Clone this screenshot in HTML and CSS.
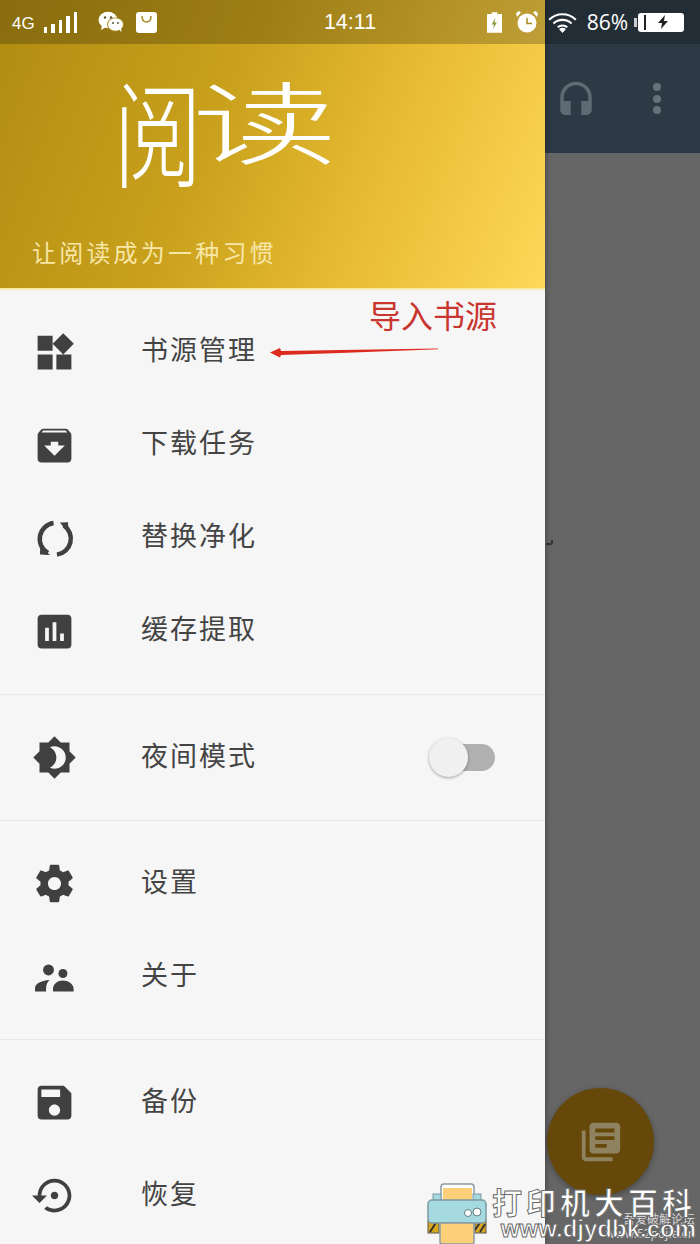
FILE: index.html
```html
<!DOCTYPE html>
<html lang="zh">
<head>
    <meta charset="UTF-8">
    <meta name="viewport" content="width=device-width, initial-scale=1.0">
    <title>阅读</title>
    <link rel="stylesheet" href="styles.css">
</head>
<body>
    <div class="screen">
        <aside class="drawer">
            <header class="drawer-head">
                <div class="logo"><span>阅</span><span>读</span></div>
                <p class="slogan">让阅读成为一种习惯</p>
            </header>
            <div class="group first">
                <div class="row">
                    <svg class="icon" viewBox="0 0 24 24"><path d="M13 13v8h8v-8h-8zM3 21h8v-8H3v8zM3 3v8h8V3H3zm13.66-1.31L11 7.34 16.66 13l5.66-5.66-5.66-5.65z"/></svg>
                    <span>书源管理</span>
                </div>
                <div class="row">
                    <svg class="icon" viewBox="0 0 24 24"><path d="M20.54 5.23l-1.39-1.68C18.88 3.21 18.47 3 18 3H6c-.47 0-.88.21-1.16.55L3.46 5.23C3.17 5.57 3 6.02 3 6.5V19c0 1.1.9 2 2 2h14c1.1 0 2-.9 2-2V6.5c0-.48-.17-.93-.46-1.27zM12 17.5L6.5 12H10v-2h4v2h3.5L12 17.5zM5.12 5l.81-1h12l.94 1H5.12z"/></svg>
                    <span>下载任务</span>
                </div>
                <div class="row">
                    <svg class="icon" viewBox="0 0 24 24"><path class="arc" d="M11.500 3.700A8.600 8.600 0 0 0 8.500 19.700"/><path class="arc" d="M17 5A8.600 8.600 0 0 1 13.300 20.600"/><path d="M4.300 15.700v4.800l5.300.3zM19.500 9.300l-.3-6-4.300.2z"/></svg>
                    <span>替换净化</span>
                </div>
                <div class="row">
                    <svg class="icon" viewBox="0 0 24 24"><path d="M19 3H5c-1.1 0-2 .9-2 2v14c0 1.1.9 2 2 2h14c1.1 0 2-.9 2-2V5c0-1.1-.9-2-2-2zM9 17H7v-7h2v7zm4 0h-2V7h2v10zm4 0h-2v-4h2v4z"/></svg>
                    <span>缓存提取</span>
                </div>
            </div>
            <div class="group">
                <div class="row">
                    <svg class="icon" viewBox="0 0 24 24"><path d="M20 8.69V4h-4.69L12 .69 8.69 4H4v4.69L.69 12 4 15.31V20h4.69L12 23.31 15.31 20H20v-4.69L23.31 12 20 8.69zM12 18c-.89 0-1.74-.2-2.5-.55C11.56 16.5 13 14.42 13 12s-1.44-4.5-3.5-5.45C10.26 6.2 11.11 6 12 6c3.31 0 6 2.69 6 6s-2.69 6-6 6z"/></svg>
                    <span>夜间模式</span>
                    <div class="switch"><i></i></div>
                </div>
            </div>
            <div class="group">
                <div class="row">
                    <svg class="icon" viewBox="0 0 24 24"><path d="M19.43 12.98c.04-.32.07-.64.07-.98s-.03-.66-.07-.98l2.11-1.65c.19-.15.24-.42.12-.64l-2-3.46c-.12-.22-.39-.3-.61-.22l-2.49 1c-.52-.4-1.08-.73-1.69-.98l-.38-2.65C14.46 2.18 14.25 2 14 2h-4c-.25 0-.46.18-.49.42l-.38 2.65c-.61.25-1.17.59-1.69.98l-2.49-1c-.23-.09-.49 0-.61.22l-2 3.46c-.13.22-.07.49.12.64l2.11 1.65c-.04.32-.07.65-.07.98s.03.66.07.98l-2.11 1.65c-.19.15-.24.42-.12.64l2 3.46c.12.22.39.3.61.22l2.49-1c.52.4 1.08.73 1.69.98l.38 2.65c.03.24.24.42.49.42h4c.25 0 .46-.18.49-.42l.38-2.65c.61-.25 1.17-.59 1.69-.98l2.49 1c.23.09.49 0 .61-.22l2-3.46c.12-.22.07-.49-.12-.64l-2.11-1.65zM12 15.5c-1.93 0-3.5-1.57-3.5-3.5s1.57-3.5 3.5-3.5 3.5 1.57 3.5 3.5-1.57 3.5-3.5 3.5z"/></svg>
                    <span>设置</span>
                </div>
                <div class="row">
                    <svg class="icon" viewBox="0 0 24 24"><circle cx="8.800" cy="8.500" r="2.900"/><circle cx="16.500" cy="10.400" r="2.400"/><path d="M11.200 20v-1.500c0-2.600 2.700-4.400 5.300-4.400s5.700 1.800 5.700 4.400V20zM1.600 20v-1.700c0-2.400 3-4.100 7.800-4.400-1.300 1.100-1.900 2.800-1.900 4.600V20z"/></svg>
                    <span>关于</span>
                </div>
            </div>
            <div class="group last">
                <div class="row">
                    <svg class="icon" viewBox="0 0 24 24"><path d="M17 3H5c-1.11 0-2 .9-2 2v14c0 1.1.89 2 2 2h14c1.1 0 2-.9 2-2V7l-4-4zm-5 16c-1.66 0-3-1.34-3-3s1.34-3 3-3 3 1.34 3 3-1.34 3-3 3zm3-10H5V5h10v4z"/></svg>
                    <span>备份</span>
                </div>
                <div class="row">
                    <svg class="icon" viewBox="0 0 24 24"><path d="M14 12c0-1.1-.9-2-2-2s-2 .9-2 2 .9 2 2 2 2-.9 2-2zm-2-9c-4.97 0-9 4.03-9 9H0l4 4 4-4H5c0-3.87 3.13-7 7-7s7 3.13 7 7-3.13 7-7 7c-1.51 0-2.91-.49-4.06-1.3l-1.42 1.44C8.04 20.3 9.94 21 12 21c4.97 0 9-4.03 9-9s-4.03-9-9-9z"/></svg>
                    <span>恢复</span>
                </div>
            </div>
        </aside>

        <main class="behind">
            <div class="appbar">
                <svg class="headset" viewBox="0 0 24 24"><path d="M12 1c-4.97 0-9 4.03-9 9v7c0 1.66 1.34 3 3 3h3v-8H5v-2c0-3.87 3.13-7 7-7s7 3.13 7 7v2h-4v8h3c1.66 0 3-1.34 3-3v-7c0-4.97-4.03-9-9-9z"/></svg>
                <div class="dots"><i></i><i></i><i></i></div>
            </div>
            <div class="fab">
                <svg viewBox="0 0 24 24"><path d="M4 6H2v14c0 1.1.9 2 2 2h14v-2H4V6zm16-4H8c-1.1 0-2 .9-2 2v12c0 1.1.9 2 2 2h12c1.1 0 2-.9 2-2V4c0-1.1-.9-2-2-2zm-1 9H9V9h10v2zm-4 4H9v-2h6v2zm4-8H9V5h10v2z"/></svg>
            </div>
        </main>

        <div class="status">
            <div class="status-left">
                <span class="net">4G</span>
                <div class="bars"><i></i><i></i><i></i><i></i><i></i></div>
                <svg class="wechat" viewBox="0 0 26 22"><ellipse cx="10" cy="9" rx="9.500" ry="8.200"/><path d="M4 14l-1 5 5-3z"/><ellipse class="cut" cx="17.500" cy="13.500" rx="8.500" ry="7"/><ellipse cx="17.500" cy="13.500" rx="7.500" ry="6.200"/><path d="M21 18l2.500 3.500-.5-5z"/><circle class="eye" cx="7" cy="6.500" r="1.300"/><circle class="eye" cx="13" cy="6.500" r="1.300"/><circle class="eye" cx="15" cy="12" r="1"/><circle class="eye" cx="20" cy="12" r="1"/></svg>
                <svg class="bag" viewBox="0 0 21 21"><rect width="21" height="21" rx="3"/><path d="M6 4c0 4 2 6 4.500 6S15 8 15 4" fill="none" stroke="#a98a22" stroke-width="1.500"/></svg>
            </div>
            <span class="clock">14:11</span>
            <div class="status-right">
                <svg class="saver" viewBox="0 0 16 22"><path d="M5 0h6v2h5v20H0V2h5z"/><path d="M9 6l-4 7h2.500L6.500 18l4-7H8z" fill="#8c9a3a"/></svg>
                <svg class="alarm" viewBox="0 0 22 22"><circle cx="11" cy="12" r="9.500"/><path d="M1 6l4-4.500L2.500 0 0 2.500zM21 6l-4-4.500L19.500 0 22 2.500z"/><path d="M11 7v5.500h5" fill="none" stroke="#a98a22" stroke-width="1.500"/></svg>
                <svg class="wifi" viewBox="0 0 30 22"><path d="M1 8a20 20 0 0 1 28 0M5.500 12a14 14 0 0 1 19 0M10 16a7.500 7.500 0 0 1 10 0" fill="none" stroke="#fff" stroke-width="2.200"/><path d="M15 22l-3.500-4a5 5 0 0 1 7 0z"/></svg>
                <span class="pct">86%</span>
                <div class="battery">
                    <svg viewBox="0 0 12 14"><path d="M8 0L1 8h4l-1 6 7-8H7z"/></svg>
                </div>
            </div>
        </div>

        <div class="note">导入书源</div>
        <svg class="arrow" viewBox="0 0 170 12"><path d="M0 6.500L10 2l1 3 60-1 97-1.500v.800L70 7 11 9l-1 2.500z"/></svg>

        <div class="speck"></div>

        <div class="mark">
            <div class="mark-small">吾爱破解论坛<br>www.52pojie.cn</div>
            <svg class="printer" viewBox="0 0 60 62">
                <rect x="14" y="1" width="33" height="30" rx="3" fill="#fdfdfd" stroke="#8b9ba3" stroke-width="1.500"/>
                <rect x="16" y="5" width="29" height="26" fill="#fbd078"/>
                <rect x="6" y="11" width="8" height="10" fill="#a5dbe0" stroke="#7e9aa0"/>
                <rect x="46" y="11" width="8" height="10" fill="#a5dbe0" stroke="#7e9aa0"/>
                <rect x="1" y="37" width="11" height="13" fill="#d8a81e" stroke="#555"/>
                <rect x="48" y="37" width="11" height="13" fill="#d8a81e" stroke="#555"/>
                <path d="M3 49l7-11M48 47l6-9M53 49l5-8" stroke="#333" stroke-width="2"/>
                <rect x="1" y="17" width="58" height="23" rx="4" fill="#a5dbe0" stroke="#7e9aa0" stroke-width="1.500"/>
                <circle cx="41" cy="30" r="3.500" fill="#fff" stroke="#607d84"/>
                <circle cx="50" cy="29" r="4" fill="#fff" stroke="#607d84"/>
                <rect x="13" y="40" width="34" height="21" rx="2" fill="#fbd078" stroke="#8b9ba3" stroke-width="1.500"/>
            </svg>
            <div class="mark-text">
                <div class="mark-name">打印机大百科</div>
                <div class="mark-url">www.djydbk.com</div>
            </div>
        </div>
    </div>
</body>
</html>
```

FILE: styles.css
```css
* {
    margin: 0;
    padding: 0;
    box-sizing: border-box;
}
body {
    font-family: "Noto Sans CJK SC", "Noto Sans", sans-serif;
    background: #666;
}
.screen {
    position: relative;
    width: 700px;
    height: 1244px;
    display: flex;
    overflow: hidden;
}

/* drawer */
.drawer {
    width: 545px;
    flex: none;
    background: #f6f6f6;
    color: #444;
    box-shadow: 0 0 6px rgba(0, 0, 0, 0.4);
    z-index: 1;
}
.drawer-head {
    height: 290px;
    padding: 60px 0 0 113px;
    background: linear-gradient(112deg, #b08c12 0%, #c9a11c 40%, #e8bc32 68%, #fdd859 100%);
    border-bottom: 2px solid #fbe9a8;
    color: #fff;
}
.logo {
    display: flex;
    height: 134px;
    font-size: 112px;
    line-height: 134px;
    font-weight: 300;
}
.logo span {
    flex: none;
    transform-origin: left top;
}
.logo span:first-child {
    width: 79px;
    transform: scale(0.8, 1.03);
}
.logo span:last-child {
    transform: translateY(4px) scale(1.3, 0.8);
}
.slogan {
    margin: 43px 0 0 -81px;
    font-size: 24px;
    line-height: 30px;
    letter-spacing: 3.2px;
    color: #f7e6a6;
}
.group {
    padding: 13px 0 19px;
    border-bottom: 1px solid #e8e8e8;
}
.group.first {
    padding: 12px 0 20px;
}
.group.last {
    border-bottom: 0;
}
.row {
    height: 93px;
    padding-left: 32px;
    display: flex;
    align-items: center;
    font-size: 27px;
    letter-spacing: 2px;
}
.icon {
    width: 45px;
    height: 45px;
    margin-top: 6px;
    margin-right: 64px;
    fill: #404040;
    flex: none;
}
.first .icon {
    margin-top: 8px;
}
.icon .arc {
    fill: none;
    stroke: #404040;
    stroke-width: 2.4;
}
.switch {
    position: relative;
    width: 50px;
    height: 27px;
    margin-top: 5px;
    margin-left: auto;
    margin-right: 50px;
    border-radius: 14px;
    background: #b0b0b0;
}
.switch i {
    position: absolute;
    left: -16px;
    top: -6px;
    width: 39px;
    height: 39px;
    border-radius: 50%;
    background: #f0f0f0;
    box-shadow: 0 1px 3px rgba(0, 0, 0, 0.35);
}

/* app behind the drawer */
.behind {
    position: relative;
    flex: 1;
    background: #666;
}
.appbar {
    height: 153px;
    padding-top: 44px;
    background: #2d3a45;
    display: flex;
    align-items: center;
}
.headset {
    width: 42px;
    height: 42px;
    margin: 4px 0 0 10px;
    fill: #5e6a74;
}
.dots {
    margin-left: 56px;
    display: flex;
    flex-direction: column;
    gap: 3.500px;
}
.dots i {
    width: 8px;
    height: 8px;
    border-radius: 50%;
    background: #66717a;
}
.fab {
    position: absolute;
    left: 2px;
    top: 1088px;
    width: 107px;
    height: 107px;
    border-radius: 50%;
    background: #66490a;
    box-shadow: 0 2px 6px rgba(0, 0, 0, 0.3);
    display: flex;
    align-items: center;
    justify-content: center;
}
.fab svg {
    width: 46px;
    height: 46px;
    fill: #8f8260;
}

/* status bar */
.status {
    position: absolute;
    left: 0;
    top: 0;
    width: 700px;
    height: 44px;
    background: rgba(0, 0, 0, 0.22);
    color: #fff;
    z-index: 2;
}
.status-left, .status-right {
    position: absolute;
    top: 0;
    height: 44px;
    display: flex;
    align-items: center;
}
.status-left {
    left: 12px;
}
.status-right {
    right: 16px;
}
.status svg {
    fill: #fff;
    flex: none;
}
.net {
    font-family: "Liberation Sans", sans-serif;
    font-size: 17px;
    margin-top: 4px;
}
.bars {
    margin-left: 9px;
    height: 21px;
    display: flex;
    align-items: flex-end;
    gap: 4px;
}
.bars i {
    width: 3.500px;
    background: #fff;
}
.bars i:nth-child(1) { height: 6px; }
.bars i:nth-child(2) { height: 9px; }
.bars i:nth-child(3) { height: 13px; }
.bars i:nth-child(4) { height: 17px; }
.bars i:nth-child(5) { height: 21px; }
.wechat {
    width: 26px;
    height: 22px;
    margin-left: 21px;
}
.wechat .cut {
    fill: #a98a22;
}
.wechat .eye {
    fill: #5d5a3a;
}
.bag {
    width: 21px;
    height: 21px;
    margin-left: 12px;
}
.clock {
    position: absolute;
    left: 0;
    width: 700px;
    top: 0;
    text-align: center;
    font-family: "Liberation Sans", sans-serif;
    font-size: 21.5px;
    line-height: 44px;
}
.saver {
    width: 15px;
    height: 21px;
}
.alarm {
    width: 22px;
    height: 22px;
    margin-left: 14px;
}
.wifi {
    width: 29px;
    height: 21px;
    margin-left: 10px;
}
.pct {
    font-family: "Open Sans", sans-serif;
    font-size: 21px;
    margin-left: 10px;
}
.battery {
    position: relative;
    width: 46px;
    height: 19px;
    margin-left: 10px;
    border: 2px solid #fff;
    border-left-width: 6px;
    border-radius: 3px;
    background: #fff;
    box-shadow: inset 2px 0 0 #222;
    display: flex;
    align-items: center;
    justify-content: center;
}
.battery::before {
    content: "";
    position: absolute;
    left: -10px;
    top: 3px;
    width: 3px;
    height: 9px;
    background: #ccc;
}
.status .battery svg {
    width: 12px;
    height: 14px;
    fill: #222;
}

/* red note drawn on the screenshot */
.note {
    position: absolute;
    left: 369px;
    top: 291px;
    font-size: 32px;
    line-height: 46px;
    color: #c9352f;
    z-index: 2;
}
.arrow {
    position: absolute;
    left: 270px;
    top: 346px;
    width: 170px;
    height: 12px;
    fill: #dc2a1e;
    z-index: 2;
}
.speck {
    position: absolute;
    left: 546px;
    top: 540px;
    width: 7px;
    height: 5px;
    border: solid #333;
    border-width: 0 2px 2px 0;
    border-radius: 0 0 3px 0;
}

/* watermark */
.mark {
    position: absolute;
    left: 427px;
    top: 1183px;
    width: 273px;
    height: 61px;
    z-index: 3;
}
.printer {
    position: absolute;
    left: 0;
    top: 0;
    width: 60px;
    height: 62px;
}
.mark-text {
    position: absolute;
    left: 64px;
    top: 3px;
    width: 205px;
    text-align: right;
    color: #fff;
    font-weight: 700;
    -webkit-text-stroke: 1px #6a6a6a;
}
.mark-name {
    font-size: 30px;
    line-height: 30px;
    letter-spacing: 4px;
    white-space: nowrap;
}
.mark-url {
    font-family: "Liberation Sans", sans-serif;
    font-size: 24px;
    line-height: 26px;
    white-space: nowrap;
}
.mark-small {
    position: absolute;
    right: 5px;
    top: 29px;
    text-align: right;
    font-size: 12px;
    line-height: 14px;
    color: #d8d8d8;
}
```
